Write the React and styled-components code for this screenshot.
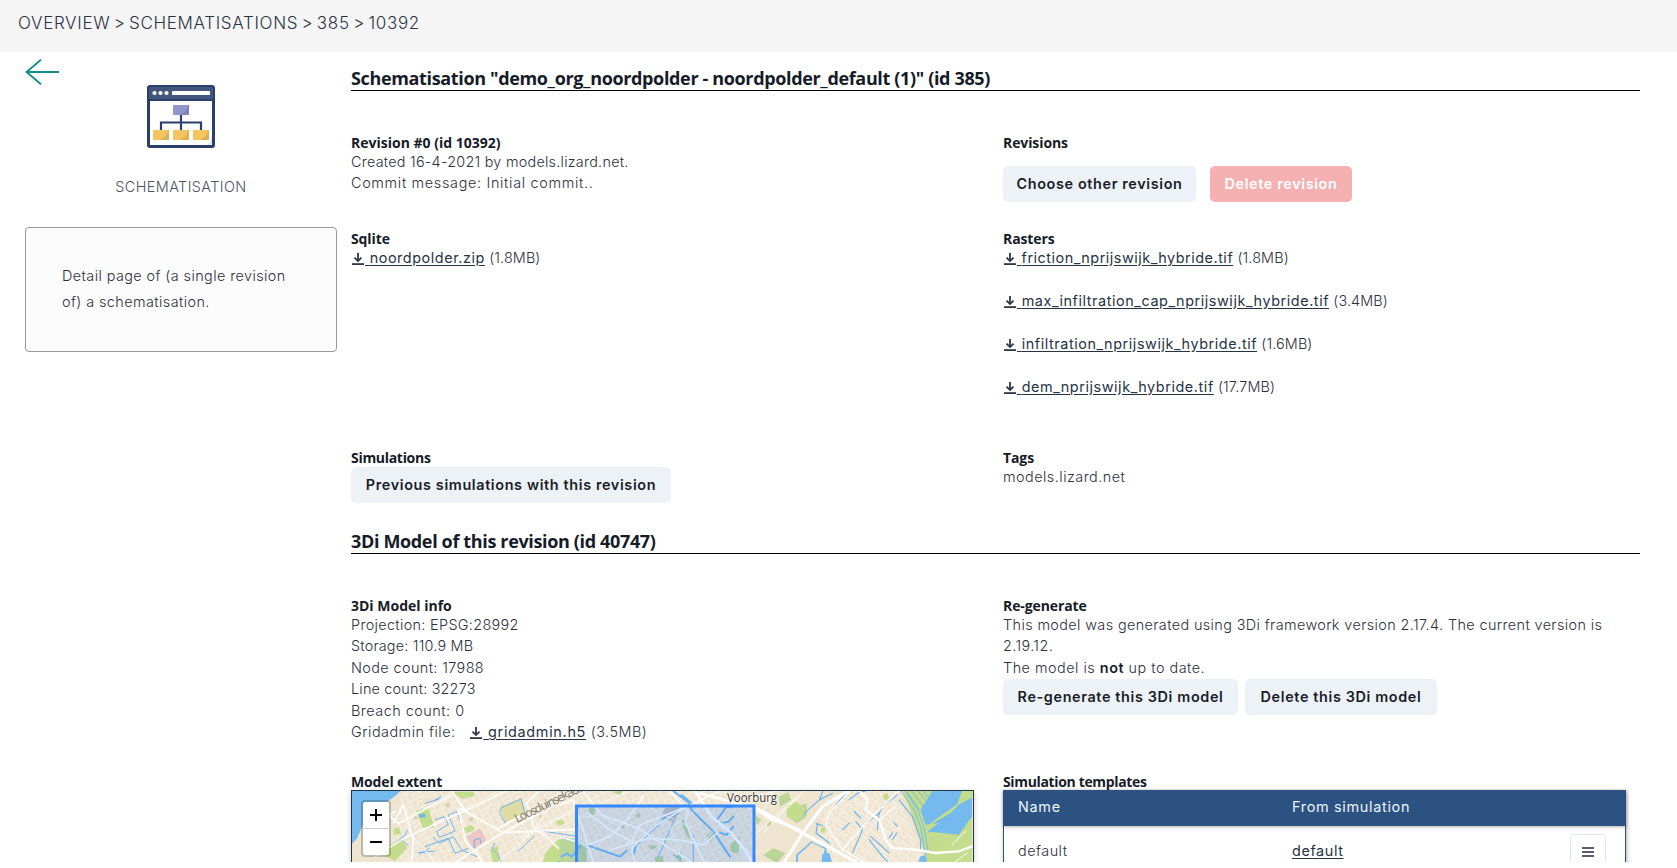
import React from 'react';
import styled, { createGlobalStyle } from 'styled-components';

const Global = createGlobalStyle`
  * { box-sizing: border-box; }
  body { margin: 0; background: #fff; }
  h1, h2, p { margin: 0; }
`;

const Page = styled.div`
  width: 100%;
  height: 862px;
  overflow: hidden;
  font: 300 14.4px/21.6px Inter, "Liberation Sans", sans-serif;
  color: #2d3040;
`;

const Header = styled.header`
  height: 52px;
  padding: 9px 18px 0;
  background: #f5f5f5;
  font-size: 17px;
  line-height: 28px;
  letter-spacing: 0.68px;
  word-spacing: -2px;
  color: #2a3346;
`;

const Body = styled.div`
  display: flex;
  gap: 14px;
  padding: 0 37px 0 25px;
`;

const Sidebar = styled.aside`
  width: 312px;
  flex: none;
  display: flex;
  flex-direction: column;
  align-items: center;
  padding-top: 7px;
`;

const BackLink = styled.a`
  align-self: flex-start;
  height: 26px;
  svg { display: block; }
`;

const SectionIcon = styled.svg`
  width: 68px;
  height: 63px;
  flex: none;
`;

const SectionName = styled.div`
  margin-top: 30px;
  line-height: 18px;
  letter-spacing: 0.42px;
  color: #4a5262;
`;

const InfoCard = styled.div`
  align-self: stretch;
  height: 125px;
  margin-top: 31px;
  padding: 35px 36px;
  border: 1px solid #999;
  border-radius: 4px;
  background: #fcfcfc;
  line-height: 26px;
  letter-spacing: 0.42px;
`;

const Main = styled.main`
  flex: 1;
  min-width: 0;
`;

const Title = styled.h1`
  padding-top: ${p => p.$top || 0}px;
  border-bottom: 1px solid #000;
  font: 700 18px/24px "Open Sans", sans-serif;
  letter-spacing: ${p => p.$ls}px;
  color: #161b28;
`;

const Row = styled.section`
  display: grid;
  grid-template-columns: 652px 1fr;
  height: ${p => p.$h}px;
  margin-top: ${p => p.$gap || 0}px;
`;

const Cell = styled.div`
  min-width: 0;
`;

const SubTitle = styled.h2`
  font: 700 14px/16px "Open Sans", sans-serif;
  letter-spacing: ${p => p.$ls || 0}px;
  color: #161b28;
  white-space: nowrap;
`;

const Line = styled.p`
  white-space: nowrap;
  letter-spacing: ${p => p.$ls ?? 0.36}px;
  b { font-weight: 600; color: #161b28; }
`;

const Buttons = styled.div`
  display: flex;
  gap: ${p => p.$gap || 7}px;
  margin-top: ${p => p.$top}px;
`;

const Button = styled.button`
  width: ${p => p.$w}px;
  height: 36px;
  padding: 0 0 ${p => p.$lift ?? 2}px;
  border: 0;
  border-radius: 5px;
  background: ${p => (p.$danger ? '#f5b1b2' : '#edf2f7')};
  color: ${p => (p.$danger ? '#fff' : '#1a1c28')};
  font: 600 14.4px Inter, sans-serif;
  letter-spacing: 0.64px;
  white-space: nowrap;
`;

const FileRow = styled.div`
  height: ${p => p.$h || 43}px;
  white-space: nowrap;
  letter-spacing: 0.12px;
`;

const FileLink = styled.a`
  font-weight: 400;
  letter-spacing: ${p => p.$ls}px;
  color: #263345;
  text-decoration: underline;
  text-underline-offset: 2px;
  svg { margin: 0 1px -2px 1px; }
`;

const MapBox = styled.div`
  position: relative;
  width: 623px;
  height: 300px;
  margin-top: 0.5px;
  border: 1px solid #223548;
  box-shadow: 0 2px 6px rgba(0, 0, 0, 0.2);
  overflow: hidden;
  svg { display: block; }
`;

const ZoomControl = styled.div`
  position: absolute;
  left: 9px;
  top: 9px;
  width: 30px;
  border: 2px solid rgba(0, 0, 0, 0.2);
  border-radius: 4px;
  background-clip: padding-box;
  background-color: #fff;
`;

const ZoomButton = styled.div`
  height: 26px;
  display: flex;
  align-items: center;
  justify-content: center;
  & + & { border-top: 1px solid #ccc; height: 27px; }
`;

const Table = styled.div`
  width: 623px;
  height: 300px;
  margin-top: 0.5px;
  box-shadow: 1px 1px 4px rgba(0, 0, 0, 0.3);
`;

const TableRow = styled.div`
  display: grid;
  grid-template-columns: 274px 1fr 37px;
  align-items: center;
  padding: ${p => (p.$head ? '0 19px 2px 15px' : '0 18px 0 14px')};
  height: ${p => (p.$head ? 36 : 50)}px;
  ${p => p.$head
    ? 'background:#2c5282;color:#edf4fb;font-weight:400;letter-spacing:.7px;position:relative;box-shadow:0 1px 3px rgba(0,0,0,.3);'
    : 'border:solid #2c5282;border-width:0 1px;letter-spacing:.5px;'}
  a { font-weight: 400; color: #263345; text-decoration: underline; text-underline-offset: 2px; letter-spacing: .6px; }
`;

const MenuButton = styled.button`
  display: flex;
  align-items: center;
  justify-content: center;
  width: 36px;
  height: 36px;
  padding: 0;
  border: 1px solid #dfe6f0;
  border-radius: 5px;
  background: #fff;
  margin-top: 1px;
`;

const DownloadIcon = () => (
  <svg width="12" height="12" viewBox="0 0 12 12" fill="none" stroke="#2d3748">
    <path d="M6 0V8M2.5 4.7L6 8.1L9.5 4.7" strokeWidth="1.8" />
    <path d="M0 11.1H12" strokeWidth="1.8" />
  </svg>
);

const File = ({ name, size, ls = 0.57, h }) => (
  <FileRow $h={h}>
    <FileLink $ls={ls}><DownloadIcon /> {name}</FileLink> {size}
  </FileRow>
);

const SchemaIcon = () => (
  <SectionIcon viewBox="0 0 68 63">
    <rect width="68" height="63" rx="3" fill="#2b3f6b" />
    <rect x="2" y="2" width="64" height="12" rx="1" fill="#42557b" />
    <rect x="3" y="16" width="62" height="44" fill="#fff" />
    <path d="M65 20V60H60Q65 55 65 48Z" fill="#e3e6ec" />
    <circle cx="7.5" cy="8" r="2.1" fill="#fff" />
    <circle cx="13.5" cy="8" r="2.1" fill="#fff" />
    <circle cx="19.5" cy="8" r="2.1" fill="#fff" />
    <rect x="25" y="6" width="38" height="4" rx=".7" fill="#fff" />
    <path d="M34 30V45M14 45V37.5H54V45" fill="none" stroke="#2b3f6b" strokeWidth="2.2" />
    <rect x="26" y="20" width="16" height="10" rx="1" fill="#9096cb" />
    <path d="M42 20V30H33Q40 27 41 20Z" fill="#7f84b8" />
    {[6, 26, 46].map(x => (
      <g key={x} transform={`translate(${x} 45)`}>
        <rect width="16" height="10" rx="1" fill="#f3c55e" />
        <path d="M16 0V10H7Q14 7 15 0Z" fill="#dbb155" />
      </g>
    ))}
  </SectionIcon>
);

const T = 'scale(.33333)';

const MapDrawing = () => (
  <svg width="621" height="72" viewBox="352 791 621 72">
    <defs>
      <pattern id="streets" width="13" height="10" patternUnits="userSpaceOnUse" patternTransform="rotate(-27)">
        <path d="M0 1H13M1 1V10M6 5H13M7 5V10" stroke="#fbf8f1" strokeWidth=".8" fill="none" />
      </pattern>
      <pattern id="streetsEast" width="11" height="9" patternUnits="userSpaceOnUse" patternTransform="rotate(35)">
        <path d="M0 1H11M1 1V9M5 5H11M5 1V5" stroke="#fbf8f1" strokeWidth=".8" fill="none" />
      </pattern>
    </defs>
    <rect x="351" y="790" width="623" height="75" fill="#eee4d0" />
    <path d="M400 790H757V865H395Z" fill="url(#streets)" />
    <path d="M826 800L850 790H897L925 865H815Z" fill="url(#streetsEast)" />

    <g transform={`translate(345 785) ${T}`} fill="none" strokeLinecap="round" strokeLinejoin="round">
      <path d="M18 15H170L148 35L108 62L76 93L52 124L42 148L18 178Z" fill="#74baee" />
      <path d="M42 125L20 143V178L38 158Z" fill="#74baee" />
      <g fill="#c4dc8e">
        <path d="M213 78L250 66L268 128L234 130Z" />
        <path d="M320 20H385L390 33L350 42Z" />
        <path d="M232 45L262 36L283 40L278 55L250 70Z" fill="#eee4d0" />
        <path d="M130 183L167 162L187 188L150 228L120 212Z" />
        <path d="M355 130L380 120L390 133L366 145Z" />
        <path d="M145 132L163 126L167 147L147 150Z" />
        <path d="M600 205L640 163L690 160V250H590Z" />
        <path d="M435 195L458 180L466 250H448Z" />
        <path d="M632 110L650 103L660 115L642 122Z" />
      </g>
      <path d="M465 65L530 40L540 88L480 113Z" fill="#dedba3" />
      <path d="M365 155L405 130L426 165L385 195Z" fill="#edc6c6" />
      <g stroke="#6db5ee" strokeWidth="3">
        <path d="M270 45L288 35M240 55L283 42" />
        <path d="M225 88H240V96H225Z" fill="#74baee" />
        <path d="M464 82L469 68L528 42L540 85M480 113L465 85" />
        <path d="M270 105L297 95L310 118L275 140L283 157L330 138L310 90L335 80L345 105" />
        <path d="M265 158L283 175L325 155L350 195L395 215M240 185L310 160L330 205L370 190" />
        <path d="M220 203L270 198M225 207L253 190M388 188V165L405 160L408 175" />
        <path d="M450 175L440 190L460 210L468 231M145 180L180 150L187 135M170 165L190 182" />
        <path d="M518 200L568 153M572 135L690 153M663 192L650 231" />
        <path d="M655 215L690 190M640 230L690 220" />
      </g>
      <g fill="#dfcdb1">
        <circle cx="308" cy="60" r="7" /><circle cx="213" cy="98" r="5" /><circle cx="378" cy="103" r="7" /><circle cx="587" cy="95" r="5" /><circle cx="350" cy="120" r="5" />
      </g>
      <g stroke="#fff" strokeWidth="5">
        <path d="M320 16L360 77L520 0M360 77L180 158L90 215M345 70L475 143L690 133" />
        <path d="M145 115L175 60L205 165L200 231M150 80L130 90L160 115L320 30" />
        <path d="M475 143L365 210L320 240M475 143L690 23M460 130L530 90" />
        <path d="M340 70L362 170L400 210L415 240M580 20L545 55L570 135L600 150L640 190" />
        <path d="M570 135L450 240M640 25L565 140M205 155L270 231M525 160L690 75" strokeWidth="3" />
      </g>
    </g>

    <g transform={`translate(560 785) ${T}`} fill="none" strokeLinecap="round" strokeLinejoin="round">
      <g fill="#b9d597">
        <path d="M0 165L35 160L80 190V250H0Z" />
        <path d="M85 70L105 65L103 90H90ZM265 180L290 182L292 193L270 192ZM285 215L310 213V240H285ZM510 180L540 152L535 207L513 200ZM345 215L365 200L367 240ZM440 150L465 135L468 153L450 170ZM362 105L375 100L392 165L378 150ZM183 120L193 120V130H183ZM225 90L240 85L242 95L228 98Z" />
        <path d="M657 35L685 22L693 45L660 65ZM680 75L740 55V95L710 115ZM610 210L640 190L676 205L650 235ZM587 92L605 105L590 120ZM620 115L630 108L638 118L626 127Z" />
        <path d="M160 20L190 16L180 32Z" />
      </g>
      <path d="M315 70L360 60L345 110L300 100Z" fill="#c4beb2" />
      <g stroke="#6db5ee" strokeWidth="5">
        <path d="M0 155L80 180L180 215L200 197M220 210L228 180L315 100L355 85" strokeWidth="6" />
        <path d="M340 18L385 52L395 75L460 140L510 215M365 30L395 55" strokeWidth="6" />
        <path d="M472 103L500 65L515 67M475 115L505 110L520 95M480 143L500 150L520 125M5 215L20 205L35 215L60 185" strokeWidth="6" />
        <path d="M340 210L370 225M295 215L345 100M400 230V150" strokeWidth="3" />
      </g>
      <g stroke="#fff" strokeWidth="5">
        <path d="M0 60L40 45L80 170L100 231M65 15L125 90L235 130L410 240M0 155L80 180L150 155L200 105L250 35" />
        <path d="M400 10L455 95L515 145L555 195L575 231" strokeWidth="9" />
        <path d="M330 20L385 80L375 110L430 225L455 240M85 85L150 135L215 170L240 120L380 65L500 10" />
        <path d="M380 65L290 120L215 190L225 240M360 165L430 180L470 145M150 195L265 160L360 165" />
        <path d="M420 25L580 70L640 105L720 135" strokeWidth="8" />
        <path d="M587 145L720 30M600 30L730 0M640 15L610 80L650 110" strokeWidth="3" />
        <path d="M50 100L120 90L170 120M90 200L150 145M270 70L400 130M430 60L330 130L370 230M500 100L430 170M250 225L310 170M110 60L200 20" strokeWidth="2.5" />
      </g>
    </g>

    <g transform={`translate(650 770) scale(.332)`} fill="none" strokeLinecap="round" strokeLinejoin="round">
      <path d="M760 62H970V290H840L815 210L780 110Z" fill="#c4dc8e" />
      <path d="M850 64L970 62V140L930 195L880 190L835 185L870 160L830 165L815 120Z" fill="#74baee" />
      <path d="M940 62L972 60V82L930 105L905 130L870 150L835 170L830 185L838 165L880 135L925 103Z" fill="#c4dc8e" />
      <path d="M775 68L810 118M790 65L825 112M808 64L842 105M825 66L850 95" stroke="#74baee" strokeWidth="3" />
      <path d="M755 62L795 120L815 170L830 260M768 62L805 118L825 170L838 250" stroke="#74baee" strokeWidth="3" />
      <path d="M815 260L830 257L835 276H808Z" fill="#74baee" />
      <path d="M440 255L485 215L530 235L545 290H440Z" fill="#74baee" />
      <path d="M446 257L488 219L527 238L515 280H446Z" fill="#eee4d0" />
      <path d="M518 276V255L540 250L548 276Z" fill="#74baee" />
      <g fill="#c4dc8e"><path d="M412 110L440 95L473 118L440 158L412 140ZM515 173L528 172V188H515ZM700 75L715 70L720 85L706 92Z" /></g>
      <g stroke="#6db5ee" strokeWidth="3.5">
        <path d="M465 130L510 90L520 65M510 90L550 70M505 160L500 190L540 220M500 162L520 168" />
        <path d="M560 105L587 75M600 90L625 70L650 62M615 125L635 145M690 132L700 110L745 75" />
        <path d="M620 155L640 180L610 250M660 210L700 260L715 275M665 200L720 250M720 205L730 190M735 160L745 170M730 210L743 190" />
        <path d="M580 180L600 160M650 160L690 130L685 180M750 90L790 140L815 210V240" />
      </g>
      <g stroke="#fff">
        <path d="M320 115L460 190L620 276M405 276L460 190L520 110L610 55" strokeWidth="9" />
        <path d="M630 62L655 90L650 120L690 150L710 210L730 235L800 240L860 250L930 245L970 230" strokeWidth="7" />
        <path d="M600 65L540 130L530 165L580 240L650 280M580 240L655 155L750 62M690 150L740 110" strokeWidth="4" />
        <path d="M340 190L465 62M920 276L955 250M910 225L950 185" strokeWidth="3" />
      </g>
    </g>

    <rect x="576.5" y="806" width="177.5" height="120" fill="#3388ff" fillOpacity=".2" stroke="#3388ff" strokeWidth="3" />
    <text x="0" y="0" transform="translate(517 823) rotate(-26)" fontFamily="Open Sans" fontSize="12" fontWeight="500" fill="#7d7567" textLength="76">Loosduinsekade</text>
    <text x="727" y="802" fontFamily="Open Sans" fontSize="12" fontWeight="500" fill="#333" stroke="#fff" strokeWidth="2" strokeOpacity=".6" paintOrder="stroke" textLength="50" lengthAdjust="spacingAndGlyphs">Voorburg</text>
  </svg>
);

export default function App() {
  return (
    <Page>
      <Global />
      <Header>OVERVIEW &gt; SCHEMATISATIONS &gt; 385 &gt; 10392</Header>
      <Body>
        <Sidebar>
          <BackLink>
            <svg width="34" height="26" viewBox="0 0 34 26" fill="none" stroke="#128c84" strokeWidth="1.8">
              <path d="M16 .7L1.5 13L16 25.3M1.5 13H34" />
            </svg>
          </BackLink>
          <SchemaIcon />
          <SectionName>SCHEMATISATION</SectionName>
          <InfoCard>
            Detail page of (a single revision<br />of) a schematisation.
          </InfoCard>
        </Sidebar>
        <Main>
          <Title $top={14} $ls={-0.35}>Schematisation "demo_org_noordpolder - noordpolder_default (1)" (id 385)</Title>
          <Row $gap={43.5} $h={96}>
            <Cell>
              <SubTitle>Revision #0 (id 10392)</SubTitle>
              <Line $ls={0.25}>Created 16-4-2021 by models.lizard.net.</Line>
              <Line $ls={0.68}>Commit message: Initial commit..</Line>
            </Cell>
            <Cell>
              <SubTitle $ls={-0.1}>Revisions</SubTitle>
              <Buttons $top={15.5} $gap={14}>
                <Button $w={193}>Choose other revision</Button>
                <Button $w={142} $danger>Delete revision</Button>
              </Buttons>
            </Cell>
          </Row>
          <Row $h={219}>
            <Cell>
              <SubTitle $ls={-0.1}>Sqlite</SubTitle>
              <File name="noordpolder.zip" size="(1.8MB)" />
            </Cell>
            <Cell>
              <SubTitle $ls={-0.1}>Rasters</SubTitle>
              <File name="friction_nprijswijk_hybride.tif" size="(1.8MB)" ls={0.52} />
              <File name="max_infiltration_cap_nprijswijk_hybride.tif" size="(3.4MB)" />
              <File name="infiltration_nprijswijk_hybride.tif" size="(1.6MB)" />
              <File name="dem_nprijswijk_hybride.tif" size="(17.7MB)" />
            </Cell>
          </Row>
          <Row $h={79.5}>
            <Cell>
              <SubTitle $ls={-0.3}>Simulations</SubTitle>
              <Buttons $top={1.5}>
                <Button $w={320}>Previous simulations with this revision</Button>
              </Buttons>
            </Cell>
            <Cell>
              <SubTitle $ls={-0.1}>Tags</SubTitle>
              <Line $ls={0.48}>models.lizard.net</Line>
            </Cell>
          </Row>
          <Title $ls={-0.35}>3Di Model of this revision (id 40747)</Title>
          <Row $gap={43.5} $h={176}>
            <Cell>
              <SubTitle>3Di Model info</SubTitle>
              <Line $ls={0.34}>Projection: EPSG:28992</Line>
              <Line $ls={0.2}>Storage: 110.9 MB</Line>
              <Line $ls={0.4}>Node count: 17988</Line>
              <Line $ls={0.2}>Line count: 32273</Line>
              <Line $ls={0.5}>Breach count: 0</Line>
              <Line $ls={0.5}>
                Gridadmin file: &nbsp;&nbsp;<FileLink $ls={0.7}><DownloadIcon /> gridadmin.h5</FileLink> <span>(3.5MB)</span>
              </Line>
            </Cell>
            <Cell>
              <SubTitle $ls={-0.1}>Re-generate</SubTitle>
              <Line $ls={0.39}>This model was generated using 3Di framework version 2.17.4. The current version is<br />2.19.12.</Line>
              <Line $ls={0.5}>The model is <b>not</b> up to date.</Line>
              <Buttons $top={0.7}>
                <Button $w={235} $lift={0}>Re-generate this 3Di model</Button>
                <Button $w={192} $lift={0}>Delete this 3Di model</Button>
              </Buttons>
            </Cell>
          </Row>
          <Row $h={320}>
            <Cell>
              <SubTitle $ls={-0.15}>Model extent</SubTitle>
              <MapBox>
                <MapDrawing />
                <ZoomControl>
                  <ZoomButton>
                    <svg width="12" height="12"><path d="M6 0V12M0 6H12" stroke="#000" strokeWidth="2" /></svg>
                  </ZoomButton>
                  <ZoomButton>
                    <svg width="12" height="12"><path d="M0 6H12" stroke="#000" strokeWidth="2" /></svg>
                  </ZoomButton>
                </ZoomControl>
              </MapBox>
            </Cell>
            <Cell>
              <SubTitle $ls={-0.35}>Simulation templates</SubTitle>
              <Table>
                <TableRow $head><span>Name</span><span>From simulation</span></TableRow>
                <TableRow>
                  <span>default</span>
                  <span><a>default</a></span>
                  <MenuButton>
                    <svg width="12" height="10"><path d="M0 1H12M0 5H12M0 9H12" stroke="#222838" strokeWidth="1.5" /></svg>
                  </MenuButton>
                </TableRow>
              </Table>
            </Cell>
          </Row>
        </Main>
      </Body>
    </Page>
  );
}
